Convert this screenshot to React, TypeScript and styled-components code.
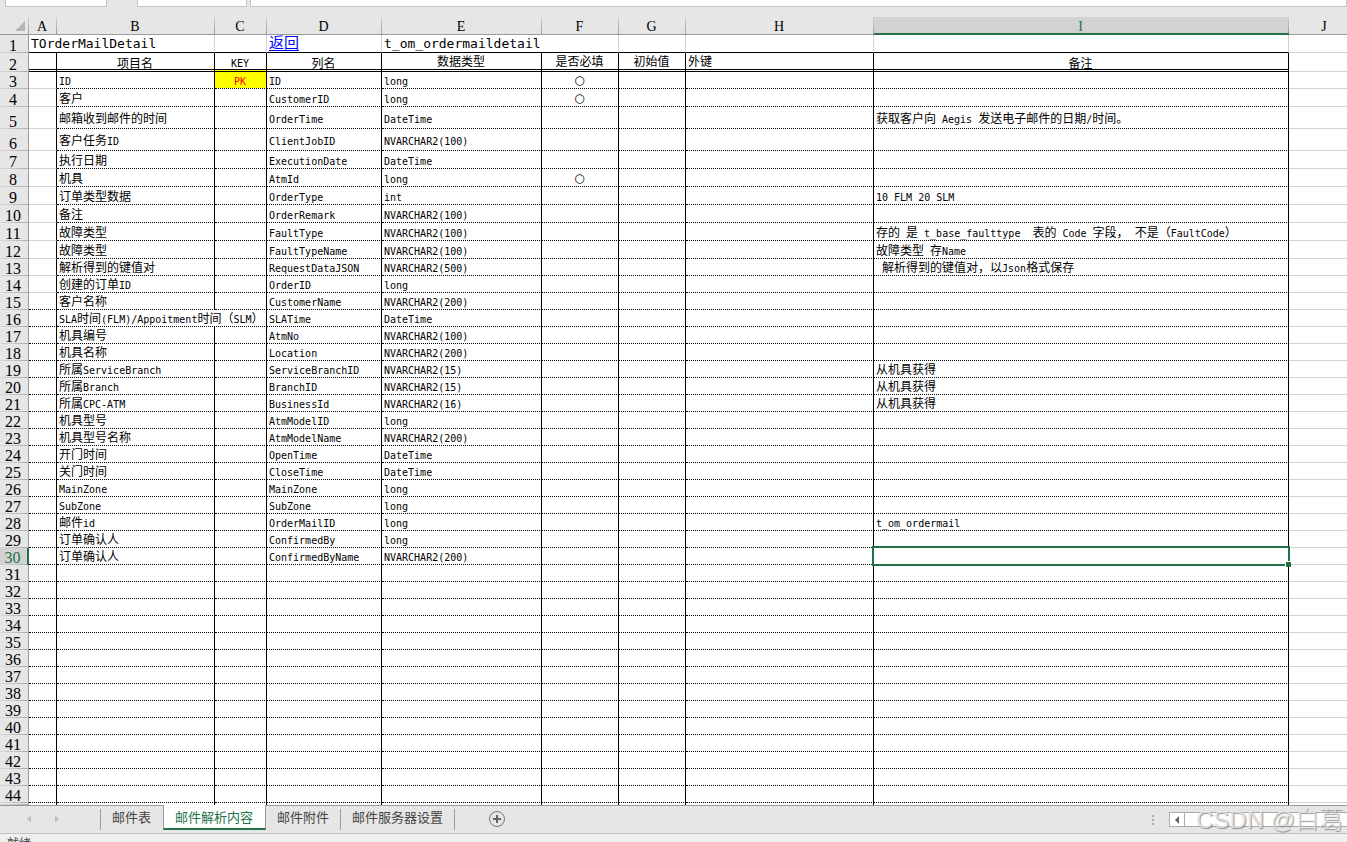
import React from 'react';
import styled, { createGlobalStyle, css } from 'styled-components';

const GREEN = '#217346';
const CHROME = '#e6e6e6';
const GRID = '#d4d4d4';

const GlobalStyle = createGlobalStyle`
  *, *::before, *::after { box-sizing: border-box; }
  body { margin: 0; background: ${CHROME}; font-family: "Noto Sans CJK SC", sans-serif; }
`;

const Page = styled.div`
  height: 100vh;
  display: flex;
  flex-direction: column;
  overflow: hidden;
`;

/* ---------- formula bar ---------- */
const FormulaBar = styled.div`
  flex: none;
  height: 17px;
  display: flex;
  align-items: flex-start;
  padding-left: 5px;
  background: ${CHROME};
`;

const BarField = styled.input<{ $width?: number; $after?: number }>`
  ${(p) => (p.$width ? css`flex: none; width: ${p.$width}px;` : css`flex: 1; min-width: 0;`)}
  height: 7px;
  margin: 0 ${(p) => p.$after ?? 0}px 0 0;
  padding: 0;
  border: 1px solid #c6c6c6;
  border-top: 0;
  border-radius: 0;
  background: #fff;
  outline: 0;
`;

/* ---------- sheet ---------- */
const Sheet = styled.main`
  flex: none;
  overflow: hidden;
  background: #fff;
`;

const Grid = styled.table`
  width: 100%;
  table-layout: fixed;
  border-collapse: separate;
  border-spacing: 0;
  color: #000;
`;

const Col = styled.col<{ $width?: number }>`
  width: ${(p) => (p.$width ? `${p.$width}px` : 'auto')};
`;

const Row = styled.tr<{ $height: number }>`
  height: ${(p) => p.$height}px;
`;

const ColHead = styled.th<{ $active?: boolean; $last?: boolean }>`
  padding: 0 ${(p) => (p.$last ? 0 : 2)}px 0 ${(p) => (p.$last ? 12 : 0)}px;
  vertical-align: bottom;
  font: 400 14px/${(p) => (p.$active ? 12 : 14)}px "Liberation Serif", serif;
  color: ${(p) => (p.$active ? GREEN : '#000')};
  border-bottom: ${(p) => (p.$active ? `2px solid ${GREEN}` : '1px solid #9b9b9b')};
  background: ${(p) =>
    p.$last
      ? CHROME
      : `linear-gradient(#d0d0d0, #9b9b9b) right / 1px 100% no-repeat ${p.$active ? '#d2d2d2' : CHROME}`};
`;

const Corner = styled(ColHead)`
  line-height: 0;
  text-align: right;
  padding: 0 4px 3px 0;
`;

const RowHead = styled.th<{ $active?: boolean }>`
  padding: 0 2px 0 0;
  vertical-align: bottom;
  text-align: center;
  font: 400 16px/15px "Liberation Serif", serif;
  color: ${(p) => (p.$active ? GREEN : '#000')};
  background: linear-gradient(90deg, #dadada, #ababab) bottom / 100% 1px no-repeat
    ${(p) => (p.$active ? '#d2d2d2' : CHROME)};
  border-right: ${(p) => (p.$active ? `2px solid ${GREEN}` : '1px solid #9b9b9b')};
`;

type Line = 'solid' | 'grid' | 'dotted' | 'double' | 'none';
const line = (l: Line) =>
  ({
    solid: '1px solid #000',
    grid: `1px solid ${GRID}`,
    dotted: '1px dotted #000',
    double: '3px double #000',
    none: '0',
  })[l];

const Cell = styled.td<{
  $right?: Line;
  $bottom?: Line;
  $center?: boolean;
  $low?: boolean;
  $large?: boolean;
}>`
  padding: 0 ${(p) => (p.$center ? 1 : 0)}px 0 ${(p) => (p.$center ? 0 : 2)}px;
  border-right: ${(p) => line(p.$right ?? 'solid')};
  border-bottom: ${(p) => line(p.$bottom ?? 'dotted')};
  text-align: ${(p) => (p.$center ? 'center' : 'left')};
  vertical-align: ${(p) => (p.$low ? 'bottom' : p.$large ? 'top' : 'middle')};
  font-size: ${(p) => (p.$large ? 15 : 12)}px;
  line-height: ${(p) => (p.$low ? 12 : 14)}px;
  white-space: pre;
  overflow: ${(p) => (p.$large ? 'visible' : 'hidden')};
`;

const KeyTitle = styled(Cell)`
  background: linear-gradient(#fff, #fff) padding-box, #ff0 border-box;
`;

const PrimaryKey = styled(Cell)`
  background: #ff0;
  background-clip: padding-box;
  color: #f00;
`;

const RequiredCell = styled(Cell)`
  font-family: "DejaVu Sans", sans-serif;
`;

const SelectedCell = styled(Cell)`
  position: relative;
  overflow: visible;
  &::before {
    content: '';
    position: absolute;
    inset: -2px;
    border: 2px solid ${GREEN};
  }
  &::after {
    content: '';
    position: absolute;
    right: -3px;
    bottom: -3px;
    width: 6px;
    height: 6px;
    background: ${GREEN};
    border: solid #fff;
    border-width: 1px 0 0 1px;
  }
`;

const Latin = styled.span<{ $large?: boolean }>`
  font-family: "DejaVu Sans Mono", monospace;
  font-size: ${(p) => (p.$large ? 13 : 10)}px;
  line-height: 10px;
`;

const SheetLink = styled.a`
  color: #00f;
  text-decoration: underline;
  text-underline-offset: 2px;
`;

/* ---------- tab strip ---------- */
const TabStrip = styled.nav`
  position: relative;
  flex: none;
  height: 29px;
  display: flex;
  align-items: flex-start;
  background: ${CHROME};
  border-top: 1px solid #9b9b9b;
  border-bottom: 1px solid #c0c0c0;
`;

const TabArrows = styled.div`
  width: 100px;
  height: 26px;
  display: flex;
  align-items: center;
  gap: 22px;
  padding-left: 26px;
`;

const PlainButton = styled.button`
  display: flex;
  align-items: center;
  justify-content: center;
  padding: 0;
  border: 0;
  background: none;
  color: inherit;
`;

const Tabs = styled.div`
  display: flex;
  align-items: flex-start;
`;

const Tab = styled.button<{ $active?: boolean; $first?: boolean; $bare?: boolean }>`
  height: 21px;
  margin: 3px 0 0;
  padding: 0 ${(p) => (p.$bare ? 12 : 11)}px 5px 11px;
  border: 0 solid #9b9b9b;
  border-right-width: ${(p) => (p.$bare ? 0 : 1)}px;
  border-left-width: ${(p) => (p.$first ? 1 : 0)}px;
  background: none;
  color: #444;
  font: 400 13px/16px "Noto Sans CJK SC", sans-serif;
  white-space: nowrap;
  ${(p) =>
    p.$active &&
    css`
      height: 25px;
      margin-top: -1px;
      padding: 4px 12px 3px 11px;
      border-width: 0 1px 2px;
      border-bottom-color: ${GREEN};
      background: #fff;
      color: ${GREEN};
    `}
`;

const AddSheet = styled(PlainButton)`
  margin: 4px 0 0 33px;
  width: 18px;
  height: 18px;
`;

const ScrollArea = styled.div`
  margin-left: auto;
  display: flex;
  align-items: center;
  padding-top: 6px;
  gap: 14px;
`;

const ScrollBar = styled.div`
  width: 178px;
  height: 15px;
  display: flex;
  border: 1px solid #ababab;
  border-right: 0;
  background: #fff;
`;

const ScrollButton = styled(PlainButton)`
  width: 15px;
  border-right: 1px solid #ababab;
`;

const Watermark = styled.div`
  position: absolute;
  right: 4px;
  top: -3px;
  font: 300 24px/34px "Liberation Sans", "Noto Sans CJK SC", sans-serif;
  color: rgba(236, 236, 236, 0.8);
  text-shadow: 1px 1px 1px rgba(110, 110, 110, 0.7);
  white-space: nowrap;
  pointer-events: none;
`;

const StatusBar = styled.footer`
  flex: none;
  height: 24px;
  padding: 0 0 0 7px;
  background: #f0f0f0;
  color: #444;
  font-size: 12px;
  line-height: 18px;
`;

/* ---------- data ---------- */
const COLUMNS: [string, number?][] = [
  ['A', 28], ['B', 158], ['C', 52], ['D', 115], ['E', 160],
  ['F', 77], ['G', 67], ['H', 188], ['I', 415], ['J'],
];

interface Field {
  name: string;
  column: string;
  type: string;
  required?: boolean;
  key?: boolean;
  note?: string;
}

const f = (name: string, column: string, type: string, note?: string): Field => ({ name, column, type, note });

const FIELDS: Field[] = [
  { ...f('ID', 'ID', 'long'), required: true, key: true },
  { ...f('客户', 'CustomerID', 'long'), required: true },
  f('邮箱收到邮件的时间', 'OrderTime', 'DateTime', '获取客户向 Aegis 发送电子邮件的日期/时间。'),
  f('客户任务ID', 'ClientJobID', 'NVARCHAR2(100)'),
  f('执行日期', 'ExecutionDate', 'DateTime'),
  { ...f('机具', 'AtmId', 'long'), required: true },
  f('订单类型数据', 'OrderType', 'int', '10 FLM 20 SLM'),
  f('备注', 'OrderRemark', 'NVARCHAR2(100)'),
  f('故障类型', 'FaultType', 'NVARCHAR2(100)', '存的 是 t_base_faulttype  表的 Code 字段， 不是（FaultCode）'),
  f('故障类型', 'FaultTypeName', 'NVARCHAR2(100)', '故障类型 存Name'),
  f('解析得到的键值对', 'RequestDataJSON', 'NVARCHAR2(500)', ' 解析得到的键值对，以Json格式保存'),
  f('创建的订单ID', 'OrderID', 'long'),
  f('客户名称', 'CustomerName', 'NVARCHAR2(200)'),
  f('SLA时间(FLM)/Appoitment时间（SLM）', 'SLATime', 'DateTime'),
  f('机具编号', 'AtmNo', 'NVARCHAR2(100)'),
  f('机具名称', 'Location', 'NVARCHAR2(200)'),
  f('所属ServiceBranch', 'ServiceBranchID', 'NVARCHAR2(15)', '从机具获得'),
  f('所属Branch', 'BranchID', 'NVARCHAR2(15)', '从机具获得'),
  f('所属CPC-ATM', 'BusinessId', 'NVARCHAR2(16)', '从机具获得'),
  f('机具型号', 'AtmModelID', 'long'),
  f('机具型号名称', 'AtmModelName', 'NVARCHAR2(200)'),
  f('开门时间', 'OpenTime', 'DateTime'),
  f('关门时间', 'CloseTime', 'DateTime'),
  f('MainZone', 'MainZone', 'long'),
  f('SubZone', 'SubZone', 'long'),
  f('邮件id', 'OrderMailID', 'long', 't_om_ordermail'),
  f('订单确认人', 'ConfirmedBy', 'long'),
  f('订单确认人', 'ConfirmedByName', 'NVARCHAR2(200)'),
];

const LAST_ROW = 44;
const SELECTED_ROW = 30;
const WIDE_NAME_ROW = 16;

const rowHeight = (n: number) => {
  if (n === 3) return 17;
  if (n === 5 || n === 6) return 22;
  return n < 13 ? 18 : 17;
};

/* Half-width runs use the monospaced face; everything else stays in the CJK face. */
function Mixed({ text = '', large }: { text?: string; large?: boolean }) {
  return (
    <>
      {text.split(/([\x20-\x7e]+)/).filter(Boolean).map((part, i) =>
        /^[\x20-\x7e]/.test(part) ? <Latin key={i} $large={large}>{part}</Latin> : part,
      )}
    </>
  );
}

function FieldRow({ n, field }: { n: number; field?: Field }) {
  const wide = n === WIDE_NAME_ROW;
  const Key = field?.key ? PrimaryKey : Cell;
  const Note = n === SELECTED_ROW ? SelectedCell : Cell;
  return (
    <Row $height={rowHeight(n)}>
      <RowHead scope="row" $active={n === SELECTED_ROW}>{n}</RowHead>
      <Cell $bottom={n < 15 ? 'grid' : 'dotted'} />
      <Cell colSpan={wide ? 2 : 1}><Mixed text={field?.name} /></Cell>
      {!wide && <Key $center><Mixed text={field?.key ? 'PK' : ''} /></Key>}
      <Cell><Mixed text={field?.column} /></Cell>
      <Cell><Mixed text={field?.type} /></Cell>
      <RequiredCell $center>{field?.required ? '○' : ''}</RequiredCell>
      <Cell />
      <Cell />
      <Note><Mixed text={field?.note} /></Note>
      <Cell $right="none" $bottom="grid" />
    </Row>
  );
}

export default function App() {
  const rows = Array.from({ length: LAST_ROW - 2 }, (_, i) => i + 3);
  return (
    <Page>
      <GlobalStyle />
      <FormulaBar>
        <BarField aria-label="名称框" $width={102} $after={30} />
        <BarField aria-label="函数" $width={110} $after={3} />
        <BarField aria-label="编辑栏" />
      </FormulaBar>

      <Sheet>
        <Grid>
          <colgroup>
            <Col $width={29} />
            {COLUMNS.map(([id, width]) => <Col key={id} $width={width} />)}
          </colgroup>
          <thead>
            <Row $height={18}>
              <Corner>
                <svg width="10" height="10" viewBox="0 0 10 10" aria-hidden="true">
                  <path d="M10 0V10H0Z" fill="#b4b4b4" />
                </svg>
              </Corner>
              {COLUMNS.map(([id]) => (
                <ColHead key={id} scope="col" $active={id === 'I'} $last={id === 'J'}>{id}</ColHead>
              ))}
            </Row>
          </thead>
          <tbody>
            <Row $height={18}>
              <RowHead scope="row">1</RowHead>
              <Cell colSpan={2} $large $right="grid" $bottom="solid"><Mixed large text="TOrderMailDetail" /></Cell>
              <Cell $right="grid" $bottom="solid" />
              <Cell $large $right="grid" $bottom="solid"><SheetLink href="#index">返回</SheetLink></Cell>
              <Cell colSpan={2} $large $right="grid" $bottom="solid"><Mixed large text="t_om_ordermaildetail" /></Cell>
              <Cell $right="grid" $bottom="solid" />
              <Cell $right="grid" $bottom="solid" />
              <Cell $right="grid" $bottom="solid" />
              <Cell $right="none" $bottom="grid" />
            </Row>
            <Row $height={19}>
              <RowHead scope="row">2</RowHead>
              <Cell $bottom="double" />
              <Cell $bottom="double" $center $low>项目名</Cell>
              <KeyTitle $bottom="double" $center $low><Mixed text="KEY" /></KeyTitle>
              <Cell $bottom="double" $center $low>列名</Cell>
              <Cell $bottom="double" $center>数据类型</Cell>
              <Cell $bottom="double" $center>是否必填</Cell>
              <Cell $bottom="double" $center>初始值</Cell>
              <Cell $bottom="double">外键</Cell>
              <Cell $bottom="double" $center $low>备注</Cell>
              <Cell $right="none" $bottom="grid" />
            </Row>
            {rows.map((n) => <FieldRow key={n} n={n} field={FIELDS[n - 3]} />)}
            <Row $height={2}>
              <RowHead />
              {COLUMNS.map(([id]) => (
                <Cell key={id} $bottom="none" $right={id === 'J' ? 'none' : 'solid'} />
              ))}
            </Row>
          </tbody>
        </Grid>
      </Sheet>

      <TabStrip>
        <TabArrows>
          <PlainButton aria-label="上一个">
            <svg width="6" height="8" viewBox="0 0 6 8"><path d="M5 0.500V7.500L1 4Z" fill="#bdbdbd" /></svg>
          </PlainButton>
          <PlainButton aria-label="下一个">
            <svg width="6" height="8" viewBox="0 0 6 8"><path d="M1 0.500V7.500L5 4Z" fill="#bdbdbd" /></svg>
          </PlainButton>
        </TabArrows>
        <Tabs>
          <Tab $first $bare>邮件表</Tab>
          <Tab $active $first>邮件解析内容</Tab>
          <Tab>邮件附件</Tab>
          <Tab>邮件服务器设置</Tab>
        </Tabs>
        <AddSheet aria-label="新工作表">
          <svg width="18" height="18" viewBox="0 0 18 18">
            <circle cx="9" cy="9" r="7.500" fill="none" stroke="#777" />
            <path d="M9 5V13M5 9H13" stroke="#666" strokeWidth="2" />
          </svg>
        </AddSheet>
        <ScrollArea>
          <svg width="4" height="12" viewBox="0 0 4 12" aria-hidden="true">
            <path d="M1 1h2v2h-2zM1 5h2v2h-2zM1 9h2v2h-2z" fill="#ababab" />
          </svg>
          <ScrollBar>
            <ScrollButton aria-label="向左滚动">
              <svg width="6" height="8" viewBox="0 0 6 8"><path d="M5 0V8L1 4Z" fill="#666" /></svg>
            </ScrollButton>
          </ScrollBar>
        </ScrollArea>
        <Watermark>CSDN @白葛</Watermark>
      </TabStrip>
      <StatusBar>就绪</StatusBar>
    </Page>
  );
}
